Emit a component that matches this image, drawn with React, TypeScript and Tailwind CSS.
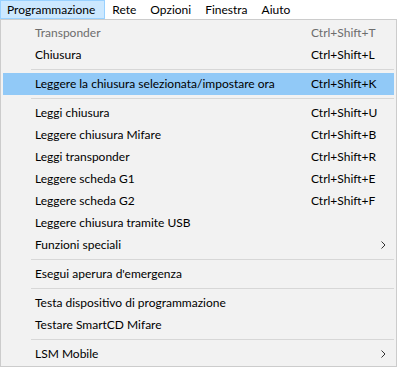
import { Fragment } from "react";

type Entry =
  | { sep: true }
  | { label: string; keys?: string; disabled?: boolean; active?: boolean; sub?: boolean };

const menus = ["Programmazione", "Rete", "Opzioni", "Finestra", "Aiuto"];

const entries: Entry[] = [
  { label: "Transponder", keys: "Ctrl+Shift+T", disabled: true },
  { label: "Chiusura", keys: "Ctrl+Shift+L" },
  { sep: true },
  { label: "Leggere la chiusura selezionata/impostare ora", keys: "Ctrl+Shift+K", active: true },
  { sep: true },
  { label: "Leggi chiusura", keys: "Ctrl+Shift+U" },
  { label: "Leggere chiusura Mifare", keys: "Ctrl+Shift+B" },
  { label: "Leggi transponder", keys: "Ctrl+Shift+R" },
  { label: "Leggere scheda G1", keys: "Ctrl+Shift+E" },
  { label: "Leggere scheda G2", keys: "Ctrl+Shift+F" },
  { label: "Leggere chiusura tramite USB" },
  { label: "Funzioni speciali", sub: true },
  { sep: true },
  { label: "Esegui aperura d'emergenza" },
  { sep: true },
  { label: "Testa dispositivo di programmazione" },
  { label: "Testare SmartCD Mifare" },
  { sep: true },
  { label: "LSM Mobile", sub: true },
];

function Chevron() {
  return (
    <svg width="5" height="8" viewBox="0 0 5 8" className="ml-auto mr-[8px]">
      <path d="M0.5 0.5 L4 4 L0.5 7.5" fill="none" stroke="#333" strokeWidth="1" />
    </svg>
  );
}

export default function App() {
  return (
    <div className="w-[398px] h-[368px] bg-white text-[12px] leading-none text-black [font-family:Lato,sans-serif]">
      <div className="flex h-[19px] items-stretch bg-white">
        {menus.map((m, i) => (
          <div
            key={m}
            className={`flex items-center pl-[6px] border ${
              i === 0 ? "bg-[#cce8ff] border-[#99d1ff] pr-[9px]" : "border-transparent pr-[6px]"
            }`}
          >
            {m}
          </div>
        ))}
      </div>
      <div className="w-[397px] border border-[#cccccc] bg-[#f2f2f2] px-[2px] pt-[2px] pb-[1px]">
        {entries.map((e, i) => (
          <Fragment key={i}>
            {"sep" in e ? (
              <div className="flex h-[7px] items-center pl-[28px]">
                <div className="h-px w-full bg-[#d7d7d7]" />
              </div>
            ) : (
              <div
                className={`flex h-[22px] items-center pl-[32px] ${
                  e.active ? "bg-[#91c9f7]" : ""
                } ${e.disabled ? "text-[#6d6d6d]" : ""}`}
              >
                <span className="flex-1 whitespace-nowrap">{e.label}</span>
                <span className="flex w-[83px] items-center whitespace-nowrap">
                  {e.keys}
                  {e.sub && <Chevron />}
                </span>
              </div>
            )}
          </Fragment>
        ))}
      </div>
    </div>
  );
}
